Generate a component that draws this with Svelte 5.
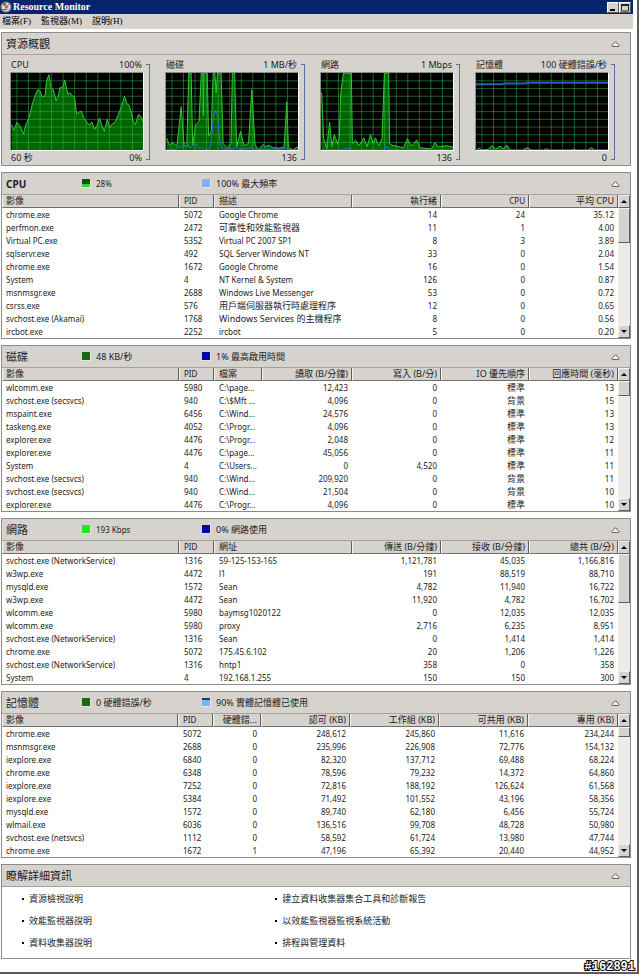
<script lang="ts">
  type Column = { label: string; width?: number; right?: boolean };
  type Legend = { swatch: string; text: string };
  type Panel = {
    id: string;
    title: string;
    legends: Legend[];
    thumb: number;
    columns: Column[];
    rows: string[][];
  };

  const menus = [
    { label: '檔案', key: 'F' },
    { label: '監視器', key: 'M' },
    { label: '說明', key: 'H' }
  ];

  // chart points live in a 400 x 235 box
  const charts = [
    {
      name: 'CPU',
      max: '100%',
      left: '60 秒',
      min: '0%',
      green:
        '2,158 8,175 18,151 27,161 38,186 45,158 55,135 63,101 75,63 81,51 88,55 95,73 103,70 108,23 115,5 121,45 128,51 137,85 145,63 148,45 156,45 163,21 172,65 178,60 186,69 192,73 199,125 207,119 213,116 222,139 232,153 237,159 245,150 253,172 261,159 268,138 275,158 283,178 292,140 299,168 307,155 315,150 325,128 335,101 344,71 351,93 358,99 365,123 370,145 377,158 386,127 394,133 400,148',
      blue: '',
      thick: false
    },
    {
      name: '磁碟',
      max: '1 MB/秒',
      left: '',
      min: '136',
      green:
        '2,198 10,220 20,213 33,223 46,103 55,222 63,224 69,0 76,0 81,220 90,158 100,148 107,0 112,0 113,130 115,0 125,0 129,193 137,178 143,0 148,0 152,60 156,0 167,0 173,215 185,228 197,215 201,0 208,0 214,225 226,178 236,222 250,215 260,51 270,220 280,233 295,218 302,225 310,220 325,228 345,229 358,226 366,88 371,228 385,234 400,225',
      blue: '2,234 30,234 35,225 46,227 60,213 72,228 90,216 102,230 108,224 116,233 132,233 138,200 145,125 150,114 156,130 163,205 170,232 205,231 214,226 222,233 250,230 258,226 268,233 350,232 362,229 372,234 400,234',
      thick: false
    },
    {
      name: '網路',
      max: '1 Mbps',
      left: '',
      min: '136',
      green:
        '2,60 8,200 18,230 26,150 33,225 40,188 50,215 55,200 60,60 68,0 92,0 95,215 105,205 115,222 130,198 140,225 150,187 158,215 165,198 175,222 185,200 192,0 205,0 208,215 215,220 250,228 262,200 272,222 280,218 290,204 300,228 335,232 345,213 355,225 380,222 400,226',
      blue: '2,235 62,235 70,229 80,233 88,228 95,235 190,235 198,222 207,235 400,235',
      thick: false
    },
    {
      name: '記憶體',
      max: '100 硬體錯誤/秒',
      left: '',
      min: '0',
      green:
        '2,235 10,230 18,235 36,233 48,222 60,232 73,223 82,232 94,220 102,235 142,235 155,228 168,235 205,235 213,231 220,235 290,235 297,232 304,235 340,235 350,228 360,235 400,235',
      blue: '0,34 80,34 85,32 150,32 156,30 400,30',
      thick: true
    }
  ];

  const gridX = Array.from({ length: 12 }, (_, i) => 18 + i * 35);
  const gridY = Array.from({ length: 9 }, (_, i) => 24 + i * 23.5);

  const panels: Panel[] = [
    {
      id: 'cpu',
      title: 'CPU',
      legends: [
        { swatch: 'green-part', text: '28%' },
        { swatch: 'sky', text: '100% 最大頻率' }
      ],
      thumb: 35,
      columns: [
        { label: '影像' },
        { label: 'PID', width: 35 },
        { label: '描述', width: 138 },
        { label: '執行緒', width: 89, right: true },
        { label: 'CPU', width: 88, right: true },
        { label: '平均 CPU', width: 89, right: true }
      ],
      rows: [
        ['chrome.exe', '5072', 'Google Chrome', '14', '24', '35.12'],
        ['perfmon.exe', '2472', '可靠性和效能監視器', '11', '1', '4.00'],
        ['Virtual PC.exe', '5352', 'Virtual PC 2007 SP1', '8', '3', '3.89'],
        ['sqlservr.exe', '492', 'SQL Server Windows NT', '33', '0', '2.04'],
        ['chrome.exe', '1672', 'Google Chrome', '16', '0', '1.54'],
        ['System', '4', 'NT Kernel & System', '126', '0', '0.87'],
        ['msnmsgr.exe', '2688', 'Windows Live Messenger', '53', '0', '0.72'],
        ['csrss.exe', '576', '用戶端伺服器執行時處理程序', '12', '0', '0.65'],
        ['svchost.exe (Akamai)', '1768', 'Windows Services 的主機程序', '8', '0', '0.56'],
        ['ircbot.exe', '2252', 'ircbot', '5', '0', '0.20']
      ]
    },
    {
      id: 'disk',
      title: '磁碟',
      legends: [
        { swatch: 'green-dark', text: '48 KB/秒' },
        { swatch: 'navy', text: '1% 最高啟用時間' }
      ],
      thumb: 15,
      columns: [
        { label: '影像' },
        { label: 'PID', width: 35 },
        { label: '檔案', width: 48 },
        { label: '讀取 (B/分鐘)', width: 90, right: true },
        { label: '寫入 (B/分)', width: 89, right: true },
        { label: 'IO 優先順序', width: 88, right: true },
        { label: '回應時間 (毫秒)', width: 89, right: true }
      ],
      rows: [
        ['wlcomm.exe', '5980', 'C:\\page...', '12,423', '0', '標準', '13'],
        ['svchost.exe (secsvcs)', '940', 'C:\\$Mft ...', '4,096', '0', '背景', '15'],
        ['mspaint.exe', '6456', 'C:\\Wind...', '24,576', '0', '標準', '13'],
        ['taskeng.exe', '4052', 'C:\\Progr...', '4,096', '0', '標準', '13'],
        ['explorer.exe', '4476', 'C:\\Progr...', '2,048', '0', '標準', '12'],
        ['explorer.exe', '4476', 'C:\\page...', '45,056', '0', '標準', '11'],
        ['System', '4', 'C:\\Users...', '0', '4,520', '標準', '11'],
        ['svchost.exe (secsvcs)', '940', 'C:\\Wind...', '209,920', '0', '背景', '11'],
        ['svchost.exe (secsvcs)', '940', 'C:\\Wind...', '21,504', '0', '背景', '10'],
        ['explorer.exe', '4476', 'C:\\Progr...', '4,096', '0', '標準', '10']
      ]
    },
    {
      id: 'network',
      title: '網路',
      legends: [
        { swatch: 'green', text: '193 Kbps' },
        { swatch: 'navy', text: '0% 網路使用' }
      ],
      thumb: 49,
      columns: [
        { label: '影像' },
        { label: 'PID', width: 35 },
        { label: '網址', width: 138 },
        { label: '傳送 (B/分鐘)', width: 89, right: true },
        { label: '接收 (B/分鐘)', width: 88, right: true },
        { label: '總共 (B/分)', width: 89, right: true }
      ],
      rows: [
        ['svchost.exe (NetworkService)', '1316', '59-125-153-165', '1,121,781', '45,035', '1,166,816'],
        ['w3wp.exe', '4472', 'l1', '191', '88,519', '88,710'],
        ['mysqld.exe', '1572', 'Sean', '4,782', '11,940', '16,722'],
        ['w3wp.exe', '4472', 'Sean', '11,920', '4,782', '16,702'],
        ['wlcomm.exe', '5980', 'baymsg1020122', '0', '12,035', '12,035'],
        ['wlcomm.exe', '5980', 'proxy', '2,716', '6,235', '8,951'],
        ['svchost.exe (NetworkService)', '1316', 'Sean', '0', '1,414', '1,414'],
        ['chrome.exe', '5072', '175.45.6.102', '20', '1,206', '1,226'],
        ['svchost.exe (NetworkService)', '1316', 'hntp1', '358', '0', '358'],
        ['System', '4', '192.168.1.255', '150', '150', '300']
      ]
    },
    {
      id: 'memory',
      title: '記憶體',
      legends: [
        { swatch: 'green-dark', text: '0 硬體錯誤/秒' },
        { swatch: 'sky-part', text: '90% 實體記憶體已使用' }
      ],
      thumb: 10,
      columns: [
        { label: '影像' },
        { label: 'PID', width: 35 },
        { label: '硬體錯...', width: 48, right: true },
        { label: '認可 (KB)', width: 89, right: true },
        { label: '工作組 (KB)', width: 89, right: true },
        { label: '可共用 (KB)', width: 89, right: true },
        { label: '專用 (KB)', width: 90, right: true }
      ],
      rows: [
        ['chrome.exe', '5072', '0', '248,612', '245,860', '11,616', '234,244'],
        ['msnmsgr.exe', '2688', '0', '235,996', '226,908', '72,776', '154,132'],
        ['iexplore.exe', '6840', '0', '82,320', '137,712', '69,488', '68,224'],
        ['chrome.exe', '6348', '0', '78,596', '79,232', '14,372', '64,860'],
        ['iexplore.exe', '7252', '0', '72,816', '188,192', '126,624', '61,568'],
        ['iexplore.exe', '5384', '0', '71,492', '101,552', '43,196', '58,356'],
        ['mysqld.exe', '1572', '0', '89,740', '62,180', '6,456', '55,724'],
        ['wlmail.exe', '6036', '0', '136,516', '99,708', '48,728', '50,980'],
        ['svchost.exe (netsvcs)', '1112', '0', '58,592', '61,724', '13,980', '47,744'],
        ['chrome.exe', '1672', '1', '47,196', '65,392', '20,440', '44,952']
      ]
    }
  ];

  const links = [
    '資源檢視說明',
    '建立資料收集器集合工具和診斷報告',
    '效能監視器說明',
    '以效能監視器監視系統活動',
    '資料收集器說明',
    '排程與管理資料'
  ];

  let closed = $state<Record<string, boolean>>({});

  function toggle(id: string) {
    closed[id] = !closed[id];
  }

  // Chinese text needs one pixel more than the Latin text to stay readable
  const isHan = (text: string) => /[\u4e00-\u9fff]/.test(text);
</script>

{#snippet collapse(id: string, title: string)}
  <button class="collapse" class:closed={closed[id]} aria-label={title} onclick={() => toggle(id)}>
    <svg width="9" height="6" viewBox="0 0 9 6">
      <path d="M4.5 0.7 L8.2 4.6 Q8.2 5.4 7.5 5.4 L1.5 5.4 Q0.8 5.4 0.8 4.6 Z" fill="#fff" stroke="#444" stroke-width="0.9" />
    </svg>
  </button>
{/snippet}

<div class="window">
  <header class="title-bar">
    <svg class="app-icon" width="12" height="12" viewBox="0 0 12 12">
      <circle cx="6" cy="6" r="5.6" fill="#8b8784" />
      <circle cx="6" cy="6" r="4.2" fill="#d9d4d0" />
      <path d="M6 6 L2.2 3.4 A4.6 4.6 0 0 1 6 1.4 Z" fill="#77706e" />
      <path d="M5 6.5 L9 3 L7 8 Z" fill="#c4473d" />
      <path d="M2.5 8.5 H7" stroke="#6a6664" stroke-width="1" />
    </svg>
    <h1>Resource Monitor</h1>
    <div class="window-buttons">
      <button aria-label="Minimize">
        <svg width="10" height="9" viewBox="0 0 10 9"><path d="M2 7 H7" stroke="#000" stroke-width="2" /></svg>
      </button>
      <button aria-label="Maximize">
        <svg width="10" height="9" viewBox="0 0 10 9">
          <path d="M1.5 1.5 H8.5 V8 H1.5 Z" fill="none" stroke="#222" />
          <path d="M1 2 H9" stroke="#222" stroke-width="2" />
        </svg>
      </button>
    </div>
  </header>

  <nav class="menu-bar">
    {#each menus as menu}
      <button>{menu.label}({menu.key})</button>
    {/each}
  </nav>

  <main>
    <section class="panel overview">
      <div class="panel-header">
        <h2>資源概觀</h2>
        {@render collapse('overview', '資源概觀')}
      </div>
      {#if !closed.overview}
        <div class="charts">
          {#each charts as chart}
            <div class="chart">
              <div class="chart-body">
                <div class="chart-label"><span>{chart.name}</span><span>{chart.max}</span></div>
                <svg class="plot" viewBox="0 0 400 235" preserveAspectRatio="none">
                  <polygon class="area" points="2,235 {chart.green} 400,235" />
                  {#each gridX as x}
                    <line class="grid" x1={x} y1="0" x2={x} y2="235" />
                  {/each}
                  {#each gridY as y}
                    <line class="grid" x1="0" y1={y} x2="400" y2={y} />
                  {/each}
                  <polyline class="green-line" points={chart.green} />
                  {#if chart.blue}
                    <polyline class="blue-line" class:thick={chart.thick} points={chart.blue} />
                  {/if}
                </svg>
                <div class="chart-label"><span>{chart.left}</span><span>{chart.min}</span></div>
              </div>
              <div class="bracket"></div>
            </div>
          {/each}
        </div>
      {/if}
    </section>

    {#each panels as panel}
      <section class="panel">
        <div class="panel-header">
          <h2 class:latin={!isHan(panel.title)}>{panel.title}</h2>
          {#each panel.legends as legend}
            <span class="legend" class:han={isHan(legend.text)}>
              <i class="swatch {legend.swatch}"></i>{legend.text}
            </span>
          {/each}
          {@render collapse(panel.id, panel.title)}
        </div>
        {#if !closed[panel.id]}
          <div class="list">
            <table>
              <colgroup>
                {#each panel.columns as column}
                  <col style:width={column.width ? `${column.width}px` : 'auto'} />
                {/each}
              </colgroup>
              <thead>
                <tr>
                  {#each panel.columns as column}
                    <th class:right={column.right} class:han={isHan(column.label)}>{column.label}</th>
                  {/each}
                </tr>
              </thead>
              <tbody>
                {#each panel.rows as row}
                  <tr>
                    {#each row as cell, i}
                      <td class:right={panel.columns[i].right} class:han={isHan(cell)}>{cell}</td>
                    {/each}
                  </tr>
                {/each}
              </tbody>
            </table>
            <div class="scrollbar">
              <button aria-label="Scroll up"><svg width="6" height="3" viewBox="0 0 6 3"><path d="M0 3 L3 0 L6 3 Z" /></svg></button>
              <div class="thumb" style:height="{panel.thumb}px"></div>
              <button class="down" aria-label="Scroll down"><svg width="6" height="3" viewBox="0 0 6 3"><path d="M0 0 L3 3 L6 0 Z" /></svg></button>
            </div>
          </div>
        {/if}
      </section>
    {/each}

    <section class="panel">
      <div class="panel-header">
        <h2>瞭解詳細資訊</h2>
        {@render collapse('learn', '瞭解詳細資訊')}
      </div>
      {#if !closed.learn}
        <ul class="links">
          {#each links as link}
            <li><a href="#help">{link}</a></li>
          {/each}
        </ul>
      {/if}
    </section>
  </main>

  <span class="stamp">#162891</span>
</div>

<style>
  :global(body) {
    margin: 0;
    background: #fff;
  }

  .window {
    position: relative;
    margin: 0 1px 2px 0;
    padding: 0 4px 13px 0;
    border-right: 2px solid #5c5c5c;
    border-bottom: 2px solid #5c5c5c;
    font-family: 'Noto Sans', 'Noto Sans CJK TC', sans-serif;
    font-size: 8px;
    color: #1c1c1c;
  }

  h1,
  h2 {
    margin: 0;
  }

  button {
    padding: 0;
    border: 0;
    background: none;
    font: inherit;
    color: inherit;
  }

  .title-bar {
    display: flex;
    align-items: center;
    height: 14px;
    padding-right: 2px;
    background: #08246b;
    color: #fff;
  }

  .title-bar h1 {
    flex: 1;
    margin-left: 1px;
    font-family: 'Liberation Serif', serif;
    font-size: 10px;
    line-height: 14px;
  }

  .window-buttons {
    display: flex;
  }

  .window-buttons button {
    display: flex;
    width: 12px;
    height: 11px;
    border: 1px solid;
    border-color: #fff #555 #555 #fff;
    box-sizing: border-box;
    background: #d6d3ce;
  }

  .menu-bar {
    display: flex;
    gap: 10px;
    height: 15px;
    padding-left: 2px;
    background: #d6d3ce;
  }

  .menu-bar button {
    font-family: 'Liberation Serif', 'Noto Sans CJK TC', serif;
    font-size: 9px;
    line-height: 15px;
    color: #000;
  }

  main {
    display: flex;
    flex-direction: column;
    gap: 6px;
    padding: 3px 2px 0 1px;
  }

  .panel {
    border: 1px solid #8c8c8c;
    background: #fff;
  }

  .panel-header {
    display: flex;
    align-items: center;
    height: 21px;
    padding: 0 10px 0 4px;
    border-bottom: 1px solid #a5a29e;
    background: #d6d3ce;
  }

  .panel-header h2 {
    min-width: 76px;
    font-size: 11px;
    font-weight: 400;
    line-height: 20px;
    white-space: nowrap;
  }

  .panel-header h2.latin {
    font-size: 10px;
    font-weight: 700;
  }

  .legend {
    display: flex;
    align-items: center;
    gap: 5px;
    width: 120px;
    line-height: 20px;
    white-space: nowrap;
  }

  .han {
    font-size: 9px;
  }

  .swatch {
    width: 8px;
    height: 8px;
    border: 1px solid #e8e6e2;
    border-width: 0 1px 1px 0;
  }

  .green {
    background: #1aec1a;
  }

  .green-dark {
    background: #146b14;
  }

  .green-part {
    background: linear-gradient(#125212 60%, #2fd42f 60%);
  }

  .navy {
    background: #0606a4;
  }

  .sky {
    background: #7ab4f2;
  }

  .sky-part {
    background: linear-gradient(#123a8c 20%, #7ab4f2 20%);
  }

  .collapse {
    display: flex;
    margin-left: auto;
  }

  .collapse.closed svg {
    transform: rotate(180deg);
  }

  .overview,
  .charts {
    background: #d6d3ce;
  }

  .charts {
    display: grid;
    grid-template-columns: repeat(4, 1fr);
    padding: 3px 0 0 8px;
  }

  .chart {
    display: flex;
    gap: 2px;
    padding-right: 15px;
  }

  .chart-body {
    flex: 1;
    min-width: 0;
  }

  .chart-label {
    display: flex;
    justify-content: space-between;
    height: 14px;
    padding: 0 2px 0 1px;
    font-size: 9px;
    line-height: 14px;
    white-space: nowrap;
  }

  .plot {
    display: block;
    width: 100%;
    height: 79px;
    border: 1px solid;
    border-color: #8c8c8c #fff #fff #8c8c8c;
    box-sizing: border-box;
    background: #000;
  }

  .plot * {
    vector-effect: non-scaling-stroke;
  }

  .area {
    fill: #006400;
  }

  .grid {
    stroke: rgba(58, 190, 84, 0.5);
    stroke-width: 1px;
  }

  .green-line {
    fill: none;
    stroke: #32c832;
    stroke-width: 1px;
  }

  .blue-line {
    fill: none;
    stroke: #2f6bc4;
    stroke-width: 1px;
  }

  .blue-line.thick {
    stroke: #3358b4;
    stroke-width: 2px;
  }

  .bracket {
    width: 3px;
    margin: 6px 0 5px;
    border: 1px solid #5a6f9c;
    border-left: 0;
  }

  .list {
    display: flex;
  }

  table {
    flex: 1;
    width: 0;
    table-layout: fixed;
    border-collapse: separate;
    border-spacing: 0;
  }

  th,
  td {
    height: 13px;
    padding: 0 4px 0 5px;
    overflow: hidden;
    text-align: left;
    font-weight: 400;
    white-space: nowrap;
    line-height: 13px;
  }

  th {
    box-sizing: border-box;
    border-right: 1px solid #5f5f5f;
    border-bottom: 1px solid #6f6f6f;
    border-left: 1px solid #f4f3f0;
    background: #d6d3ce;
    padding: 0 3px 0 4px;
    line-height: 12px;
  }

  td:first-child {
    padding-left: 4px;
  }

  th:first-child {
    padding-left: 3px;
  }

  .right {
    text-align: right;
  }

  .scrollbar {
    display: flex;
    flex-direction: column;
    width: 12px;
    background: #edebe8;
  }

  .scrollbar button,
  .thumb {
    border: 1px solid;
    border-color: #f4f3f0 #5f5f5f #5f5f5f #f4f3f0;
    box-sizing: border-box;
    background: #d6d3ce;
  }

  .scrollbar button {
    display: flex;
    align-items: center;
    justify-content: center;
    height: 13px;
  }

  .scrollbar .down {
    margin-top: auto;
  }

  .links {
    display: grid;
    grid-template-columns: 5fr 7fr;
    margin: 0;
    padding: 1px 0 4px 20px;
    list-style: none;
    font-size: 9px;
    line-height: 22px;
  }

  .links li {
    display: flex;
    align-items: center;
    gap: 5px;
  }

  .links li::before {
    content: '';
    width: 2px;
    height: 2px;
    background: #000;
  }

  .links a {
    color: inherit;
    text-decoration: none;
  }

  .stamp {
    position: absolute;
    right: 2px;
    bottom: -2px;
    font-family: 'Liberation Mono', monospace;
    font-size: 12px;
    font-weight: 700;
    line-height: 14px;
    color: #fff;
    -webkit-text-stroke: 2px #000;
    paint-order: stroke fill;
  }
</style>
